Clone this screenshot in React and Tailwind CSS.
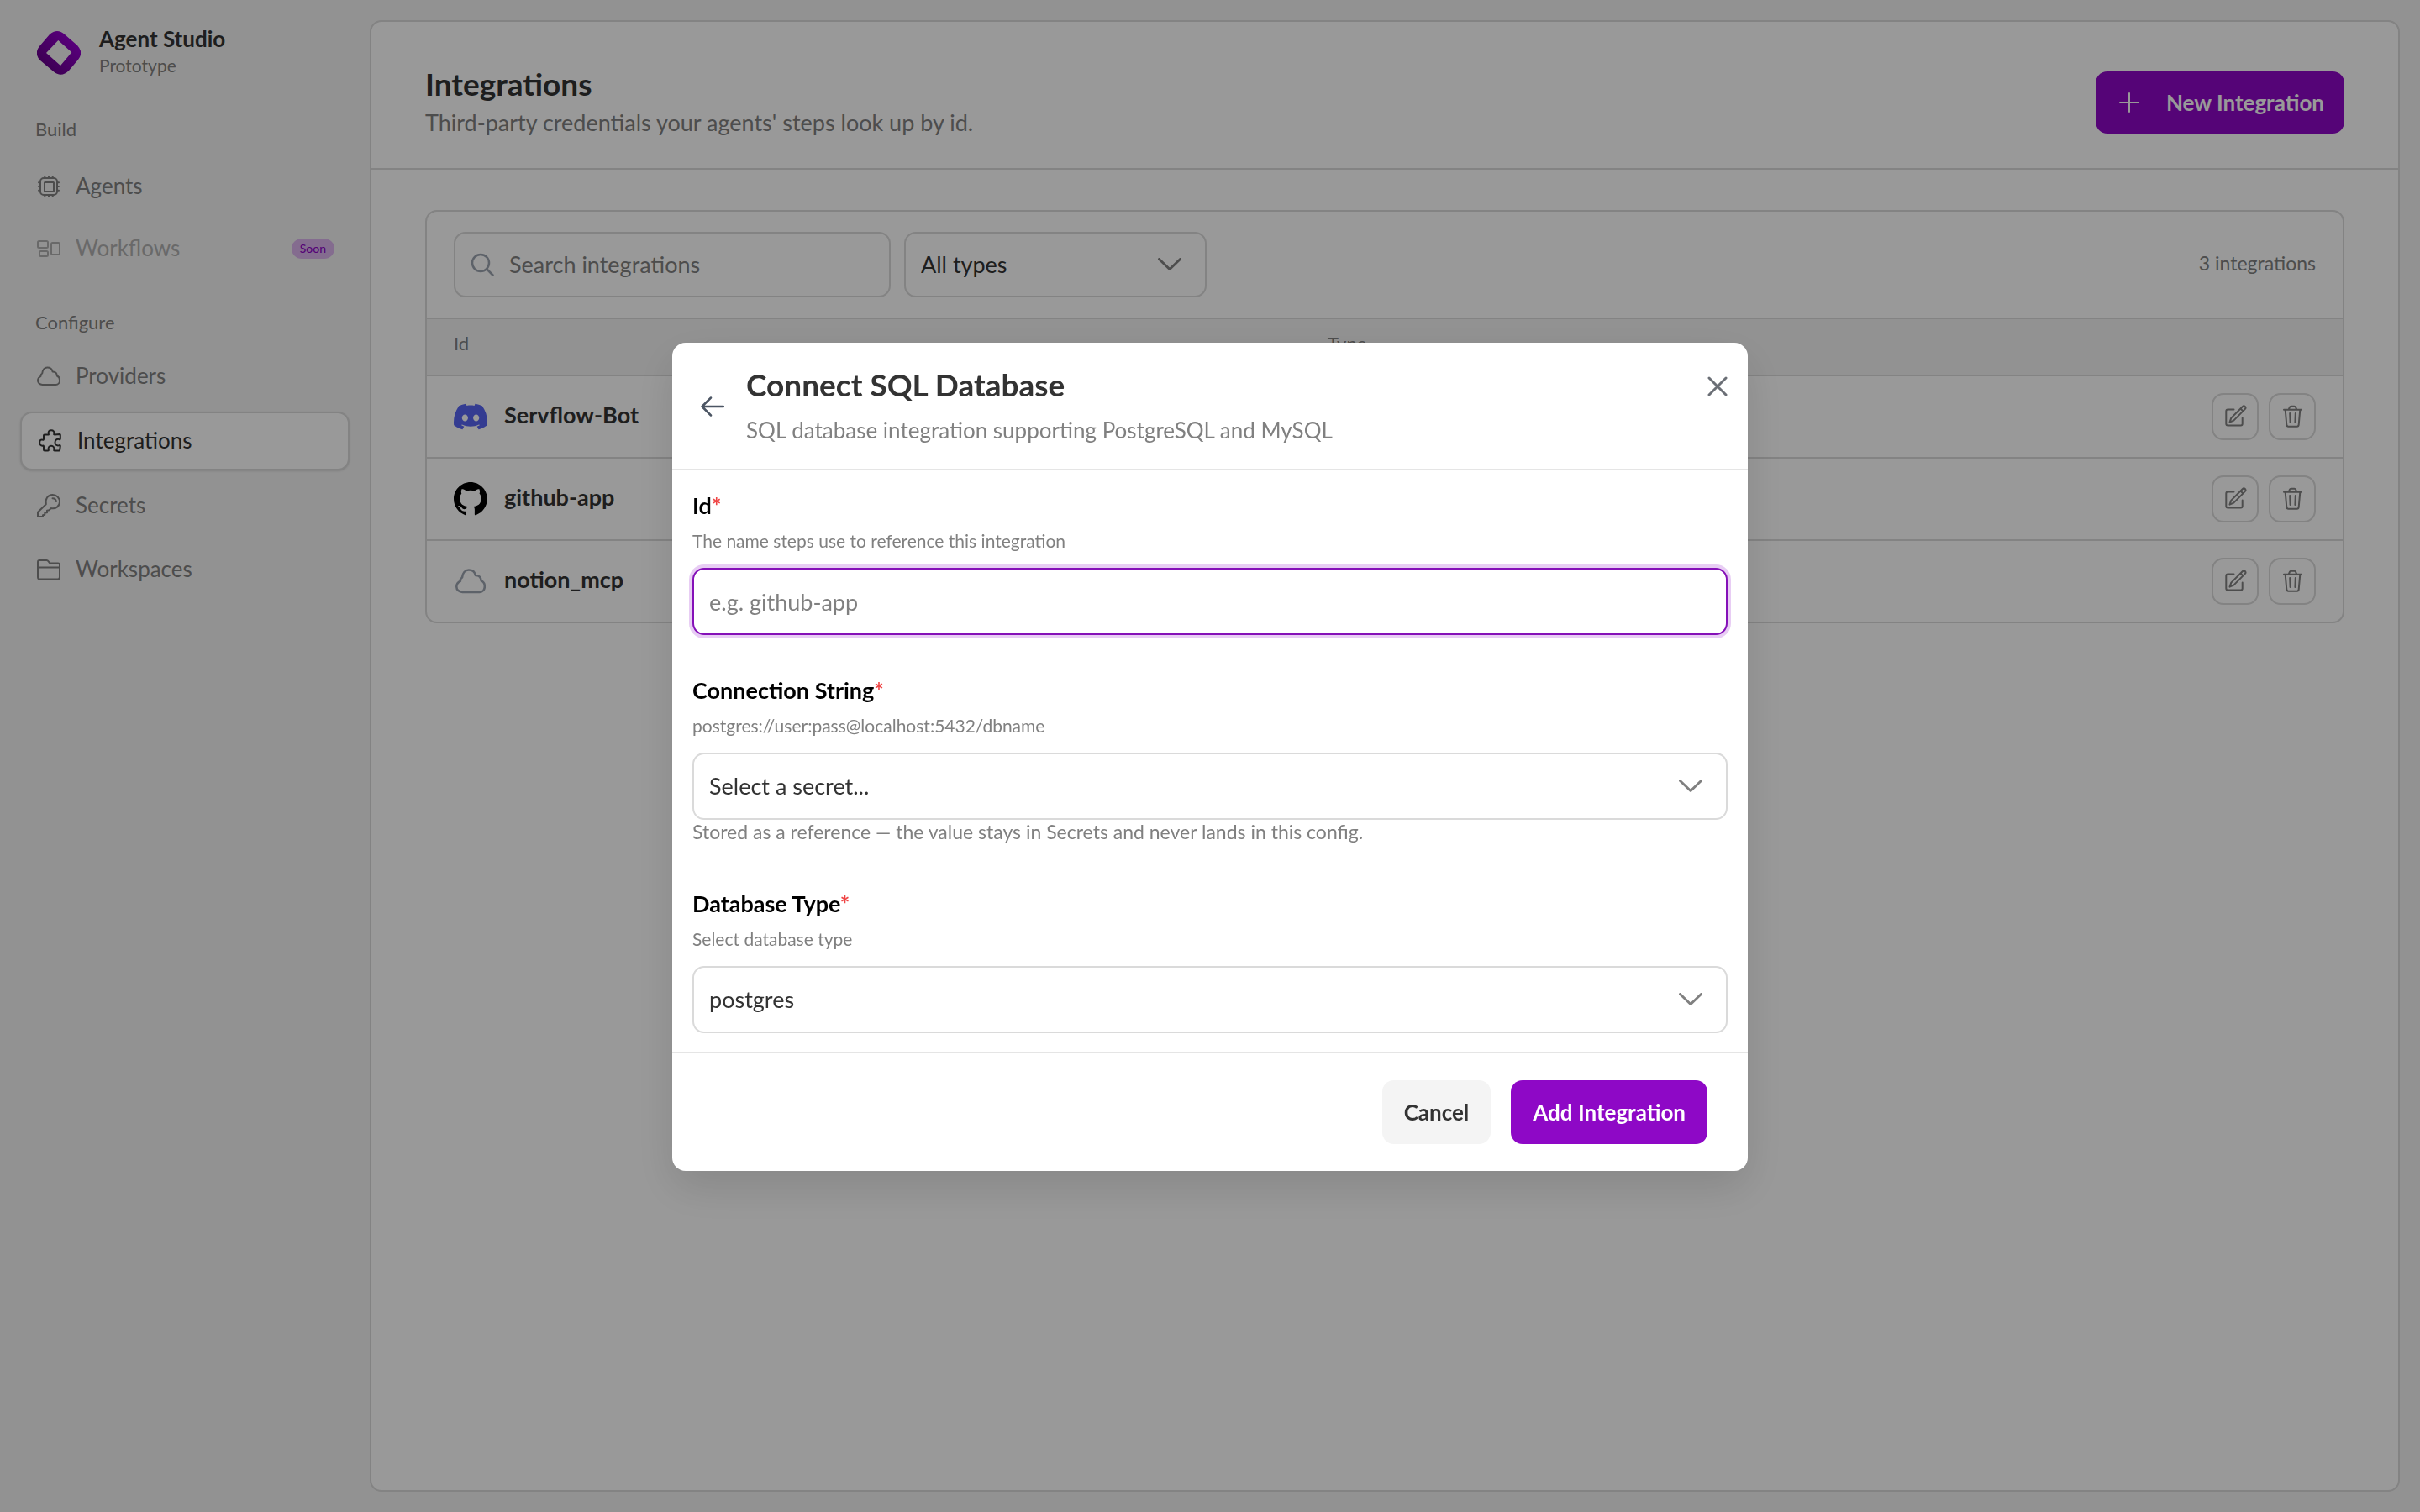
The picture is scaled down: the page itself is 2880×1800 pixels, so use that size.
import { useState } from 'react';
import { SiDiscord } from 'react-icons/si';

const stroke = {
  fill: 'none',
  stroke: 'currentColor',
  strokeWidth: 2,
  strokeLinecap: 'round',
  strokeLinejoin: 'round',
};

const ChipIcon = () => (
  <svg viewBox="0 0 28 28" className="size-7 shrink-0" {...stroke}>
    <rect x="4" y="4" width="20" height="20" rx="4" />
    <rect x="9" y="9" width="11" height="11" rx="0.5" />
    <path d="M9.3 4V2M14 4V2M18.7 4V2M9.3 26v-2M14 26v-2M18.7 26v-2M4 9.3H2M4 14H2M4 18.7H2M26 9.3h-2M26 14h-2M26 18.7h-2" />
  </svg>
);

const FlowIcon = () => (
  <svg viewBox="0 0 28 28" className="size-7 shrink-0" {...stroke}>
    <rect x="1" y="5" width="12" height="8" rx="1.5" />
    <rect x="3" y="17" width="10" height="6" rx="1.5" />
    <rect x="17" y="7" width="10" height="14" rx="1.5" />
  </svg>
);

const CloudIcon = ({ className = 'size-7 shrink-0' }) => (
  <svg viewBox="0 0 28 28" className={className} {...stroke}>
    <path d="M6.5 24C3.4 24 1 21.9 1 19c0-2.6 1.5-4.2 3.600-5.200-.2-1.500.5-2.600 1.600-3.300C6.600 6.500 9 3.500 12.300 3.500c3.300 0 5.700 2 6.300 5 3.200 0 5.200 2.100 5.200 5 2.200.9 3.300 2.900 3.300 5.200 0 2.900-1.900 5.300-4.700 5.300z" />
  </svg>
);

const PuzzleIcon = () => (
  <svg viewBox="0 0 28 28" className="size-7 shrink-0" {...stroke}>
    <path d="M6 7.500q0-1 1-1h4.200c.8 0 1-.5.7-1.200C11 2.800 12.500 1.200 15 1.200s4 1.600 3.200 4.100c-.3.7 0 1.200.8 1.200l6-.6c.5 0 .8.3.8.8v4.500c0 .9-.6 1.200-1.300.9-2.800-1-5 .9-5 3.600s2.200 4.400 5 3.400c.7-.3 1.300.1 1.300.8l-.6 4.600c-.1.7-.4 1-1 1H19c-.8 0-1-.5-.8-1.200.7-2.700-.8-4.600-3.200-4.600s-4 1.900-3.200 4.600c.2.7 0 1.200-.8 1.200H7q-1 0-1-1v-4c0-.8-.5-1.100-1.200-.8C2.500 20 1.200 18 1.200 15.800s1.400-4 3.600-3.200c.7.3 1.200 0 1.200-.8z" />
  </svg>
);

const KeyIcon = () => (
  <svg viewBox="0 0 28 28" className="size-7 shrink-0" {...stroke}>
    <path d="M10.800 12.200C9.500 6 13 1 18.600 1 23.500 1 27 4.800 27 9.300c0 5.200-4.600 9-10.300 7.800L14.500 19.300l-2.500.4v2.500l-2.700.3v2.300l-2.300.4V27H1v-5.200z" />
    <path d="M18.500 5.200c2.300 0 4.200 1.600 4.400 3.800" />
  </svg>
);

const FolderIcon = () => (
  <svg viewBox="0 0 28 28" className="size-7 shrink-0" {...stroke}>
    <path d="M1 23V5a2 2 0 0 1 2-2h8.500c1 0 1.500.4 2 1.100l1.300 1.700c.4.5.9.800 1.700.8H25a2 2 0 0 1 2 2V23a2.500 2.500 0 0 1-2.500 2.500h-21A2.500 2.500 0 0 1 1 23zM1 11.500h26" />
  </svg>
);

const EditIcon = () => (
  <svg viewBox="0 0 28 28" className="size-7" {...stroke}>
    <path d="M12.500 5.500H5.300a2 2 0 0 0-2 2v15a2 2 0 0 0 2 2h15.400a2 2 0 0 0 2-2v-7" />
    <path d="M7.500 20.600l1.800-5L22.700 2.200c1-1 2.200-1 3.100-.2.9 1 .9 2.200-.1 3.100L12.300 18.600zM20.500 4.500l2.800 2.900" />
  </svg>
);

const TrashIcon = () => (
  <svg viewBox="0 0 28 28" className="size-7" {...stroke}>
    <path d="M4 5.700h21M5.700 5.900l1.600 17.800c.1 1.300.8 2 2 2h10.400c1.200 0 1.900-.7 2-2l1.600-17.800M9.800 5.500l1.200-2.800c.3-.7.8-1 1.500-1h4c.7 0 1.200.3 1.500 1l1.200 2.800M11.200 10l.4 11M17.800 10l-.4 11" />
  </svg>
);

const GithubIcon = () => (
  <svg viewBox="0 0 98 96" className="w-10 shrink-0 fill-black">
    <path
      fillRule="evenodd"
      clipRule="evenodd"
      d="M48.854 0C21.839 0 0 22 0 49.217c0 21.756 13.993 40.172 33.405 46.690 2.427.49 3.316-1.059 3.316-2.362 0-1.141-.08-5.052-.08-9.127-13.590 2.934-16.420-5.867-16.420-5.867-2.184-5.704-5.420-7.170-5.420-7.170-4.448-3.015.324-3.015.324-3.015 4.934.326 7.523 5.052 7.523 5.052 4.367 7.496 11.404 5.378 14.235 4.074.404-3.178 1.699-5.378 3.074-6.600-10.839-1.141-22.243-5.378-22.243-24.283 0-5.378 1.940-9.778 5.014-13.200-.485-1.222-2.184-6.275.486-13.038 0 0 4.125-1.304 13.426 5.052a46.970 46.970 0 0 1 12.214-1.630c4.125 0 8.330.571 12.213 1.630 9.302-6.356 13.427-5.052 13.427-5.052 2.670 6.763.970 11.816.485 13.038 3.155 3.422 5.015 7.822 5.015 13.200 0 18.905-11.404 23.060-22.324 24.283 1.780 1.548 3.316 4.481 3.316 9.126 0 6.600-.08 11.897-.08 13.526 0 1.304.890 2.853 3.316 2.364 19.412-6.520 33.405-24.935 33.405-46.691C97.707 22 75.788 0 48.854 0z"
    />
  </svg>
);

const Chevron = () => (
  <svg viewBox="0 0 28 16" className="pointer-events-none absolute top-1/2 right-[30px] w-7 -translate-y-1/2 text-[#808080]" {...stroke} strokeWidth="3">
    <path d="M1.500 1.500L14 13.500l12.500-12" />
  </svg>
);

const Logo = () => (
  <svg viewBox="0 0 52 52" className="mt-1 size-[52px]">
    <defs>
      <linearGradient id="logo" x1="0" y1="1" x2="1" y2="0">
        <stop offset="0.200" stopColor="#67008c" />
        <stop offset="0.900" stopColor="#9a00d8" />
      </linearGradient>
    </defs>
    <path
      fill="url(#logo)"
      fillRule="evenodd"
      d="M15 4Q24-4 33 4L48 17Q56 25.500 49 34L38 47Q29 56 19.500 48L4 35Q-4 27 3 18ZM25.300 11L11 26L28 41L41.300 25.300Z"
    />
  </svg>
);

const buildItems = [
  { label: 'Agents', icon: ChipIcon },
  { label: 'Workflows', icon: FlowIcon, soon: true },
];

const configureItems = [
  { label: 'Providers', icon: CloudIcon },
  { label: 'Integrations', icon: PuzzleIcon, active: true },
  { label: 'Secrets', icon: KeyIcon },
  { label: 'Workspaces', icon: FolderIcon },
];

const integrations = [
  { id: 'Servflow-Bot', type: 'Discord', icon: <SiDiscord className="size-10 text-[#5865f2]" /> },
  { id: 'github-app', type: 'GitHub', icon: <GithubIcon /> },
  {
    id: 'notion_mcp',
    type: 'MCP',
    icon: (
      <span className="flex w-10 justify-center text-[#9ca3af]">
        <CloudIcon className="size-9" />
      </span>
    ),
  },
];

function NavItem({ label, icon: Icon, active, soon }) {
  let style = 'h-[68px] text-[#808080]';
  if (active) style = 'h-[70px] border-2 border-[#dadada] bg-white text-[#333333] shadow-sm';
  if (soon) style = 'h-[68px] text-[#b0b0b0]';

  return (
    <li>
      <a href="#" className={`flex items-center gap-[18px] rounded-[14px] pr-[18px] pl-5 text-[26px] leading-8 ${style}`}>
        <Icon />
        <span className="pb-0.5">{label}</span>
        {soon && (
          <span className="ml-auto rounded-full bg-[#dcb5ee] px-2.5 text-[14px] leading-6 font-medium text-[#8e08c6]">
            Soon
          </span>
        )}
      </a>
    </li>
  );
}

function Field({ id, label, description, hint, children }) {
  return (
    <div className="flex flex-col">
      <label htmlFor={id} className="text-[27px] leading-8 font-bold text-black">
        {label}
        <span className="text-[#ef4444]">*</span>
      </label>
      <p className="mt-3.5 text-[21px] leading-6 text-[#808080]">{description}</p>
      <div className="relative mt-5">{children}</div>
      {hint && <p className="mt-0.5 pb-2 text-[23px] leading-6 text-[#808080]">{hint}</p>}
    </div>
  );
}

const selectClass =
  'h-20 w-full appearance-none rounded-[14px] border-2 border-[#dadada] bg-white px-[18px] text-[27px] text-[#333333] outline-none';

function ConnectModal() {
  const [name, setName] = useState('');

  return (
    <div className="fixed inset-0 flex items-center justify-center bg-black/40 pt-0.5">
      <div
        role="dialog"
        aria-labelledby="modal-title"
        className="w-full max-w-[1280px] rounded-2xl bg-white shadow-[0_20px_50px_rgba(0,0,0,0.12)]"
      >
        <div className="flex items-center border-b-2 border-[#e5e5e5] pt-[30px] pr-6 pb-7 pl-[34px]">
          <button type="button" aria-label="Back" className="mr-[26px] text-[#4b5563]">
            <svg viewBox="0 0 28 28" className="size-7" {...stroke} strokeWidth="2.5">
              <path d="M12 3.500L1.500 14 12 24.500M1.500 14H27" />
            </svg>
          </button>
          <div>
            <h2 id="modal-title" className="text-[37px] leading-10 font-bold text-[#333333]">
              Connect SQL Database
            </h2>
            <p className="mt-4 text-[26px] leading-9 text-[#808080]">
              SQL database integration supporting PostgreSQL and MySQL
            </p>
          </div>
          <button type="button" aria-label="Close" className="mt-2.5 ml-auto self-start text-[#6b6f76]">
            <svg viewBox="0 0 24 24" className="size-6" {...stroke} strokeWidth="3">
              <path d="M2 2l20 20M22 2L2 22" />
            </svg>
          </button>
        </div>

        <form>
          <div className="flex flex-col gap-[50px] px-6 pt-[26px] pb-[22px]">
            <Field id="id" label="Id" description="The name steps use to reference this integration">
              <input
                id="id"
                type="text"
                value={name}
                onChange={(e) => setName(e.target.value)}
                placeholder="e.g. github-app"
                className="block h-20 w-full rounded-[14px] border-2 border-[#8510b8] bg-white px-[18px] text-[27px] text-[#333333] ring-4 ring-[#e8cdf4] outline-none placeholder:text-[#808080]"
              />
            </Field>
            <Field
              id="connection"
              label="Connection String"
              description="postgres://user:pass@localhost:5432/dbname"
              hint="Stored as a reference — the value stays in Secrets and never lands in this config."
            >
              <select id="connection" className={`block ${selectClass}`}>
                <option>Select a secret...</option>
              </select>
              <Chevron />
            </Field>
            <Field id="dbtype" label="Database Type" description="Select database type">
              <select id="dbtype" className={`block ${selectClass}`}>
                <option>postgres</option>
                <option>mysql</option>
              </select>
              <Chevron />
            </Field>
          </div>

          <div className="flex justify-end gap-6 border-t-2 border-[#e5e5e5] px-12 py-8">
            <button type="button" className="h-[76px] rounded-[14px] bg-[#f4f4f4] px-[26px] text-[26px] font-bold text-[#333333]">
              Cancel
            </button>
            <button type="button" className="h-[76px] rounded-[14px] bg-[#8e08c6] px-[26px] text-[26px] font-bold text-white">
              Add Integration
            </button>
          </div>
        </form>
      </div>
    </div>
  );
}

export default function App() {
  return (
    <div className="flex min-h-screen bg-[#f4f4f4] font-[Lato,sans-serif] text-[#333333]">
      {/* Sidebar */}
      <aside className="w-[440px] shrink-0 px-6 pt-[30px]">
        <div className="flex items-center gap-[22px] px-5">
          <Logo />
          <div className="flex flex-col gap-0.5">
            <span className="text-[26px] leading-8 font-bold">Agent Studio</span>
            <span className="text-[21px] leading-7 text-[#808080]">Prototype</span>
          </div>
        </div>
        <nav>
          <h2 className="mt-12 px-[18px] text-[22px] leading-7 text-[#808080]">Build</h2>
          <ul className="mt-5 flex flex-col gap-1.5">
            {buildItems.map((item) => (
              <NavItem key={item.label} {...item} />
            ))}
          </ul>
          <h2 className="mt-10 px-[18px] text-[22px] leading-7 text-[#808080]">Configure</h2>
          <ul className="mt-4 flex flex-col gap-2">
            {configureItems.map((item) => (
              <NavItem key={item.label} {...item} />
            ))}
          </ul>
        </nav>
      </aside>

      {/* Main panel */}
      <main className="my-6 mr-6 min-w-0 flex-1 rounded-[14px] border-2 border-[#dadada] bg-white">
        <header className="flex items-center justify-between border-b-2 border-[#dadada] px-16 pt-[54px] pb-9">
          <div>
            <h1 className="text-[37px] leading-10 font-bold">Integrations</h1>
            <p className="mt-2 text-[27px] leading-9 text-[#808080]">
              Third-party credentials your agents' steps look up by id.
            </p>
          </div>
          <button
            type="button"
            className="flex h-[74px] items-center gap-8 rounded-[14px] bg-[#8e08c6] pr-6 pl-7 text-[26px] font-bold text-white"
          >
            <svg viewBox="0 0 24 24" className="size-6" {...stroke}>
              <path d="M12 1v22M1 12h22" />
            </svg>
            New Integration
          </button>
        </header>

        <div className="px-16 pt-12">
          <div className="overflow-hidden rounded-[14px] border-2 border-[#dadada]">
            <div className="flex items-center gap-4 border-b-2 border-[#dadada] px-8 py-6">
              <label className="flex h-[78px] w-[520px] items-center gap-[18px] rounded-[14px] border-2 border-[#dadada] px-[18px]">
                <svg viewBox="0 0 28 28" className="size-7 shrink-0 text-[#9ca3af]" {...stroke} strokeWidth="2.5">
                  <circle cx="12" cy="12" r="10" />
                  <path d="M19.500 19.500l7 7" />
                </svg>
                <input
                  type="search"
                  aria-label="Search integrations"
                  placeholder="Search integrations"
                  className="w-full text-[27px] outline-none placeholder:text-[#808080]"
                />
              </label>
              <div className="relative h-[78px] w-[360px]">
                <select
                  aria-label="Type"
                  className="size-full appearance-none rounded-[14px] border-2 border-[#dadada] bg-white px-[18px] text-[27px] outline-none"
                >
                  <option>All types</option>
                </select>
                <Chevron />
              </div>
              <span className="ml-auto pb-1 text-[23px] leading-7 text-[#808080]">3 integrations</span>
            </div>

            <table className="w-full table-fixed border-separate border-spacing-0">
              <thead>
                <tr className="bg-[#f4f4f4] text-left text-[22px] leading-7 text-[#808080]">
                  <th className="h-[68px] w-[1040px] border-b-2 border-[#dadada] px-8 pb-2 font-normal">Id</th>
                  <th className="border-b-2 border-[#dadada] px-8 pb-2 font-normal">Type</th>
                  <th className="border-b-2 border-[#dadada]" aria-label="Actions"></th>
                </tr>
              </thead>
              <tbody className="[&>tr:last-child>td]:h-24 [&>tr:last-child>td]:border-b-0">
                {integrations.map((row) => (
                  <tr key={row.id}>
                    <td className="h-[98px] border-b-2 border-[#dadada] px-8">
                      <div className="flex items-center gap-5">
                        {row.icon}
                        <span className="pb-1 text-[27px] leading-8 font-bold">{row.id}</span>
                      </div>
                    </td>
                    <td className="border-b-2 border-[#dadada] px-8 text-[26px] text-[#808080]">{row.type}</td>
                    <td className="border-b-2 border-[#dadada] px-8">
                      <div className="flex justify-end gap-3 text-[#808080]">
                        <button
                          type="button"
                          aria-label={`Edit ${row.id}`}
                          className="flex size-14 items-center justify-center rounded-[14px] border-2 border-[#dadada]"
                        >
                          <EditIcon />
                        </button>
                        <button
                          type="button"
                          aria-label={`Delete ${row.id}`}
                          className="flex size-14 items-center justify-center rounded-[14px] border-2 border-[#dadada]"
                        >
                          <TrashIcon />
                        </button>
                      </div>
                    </td>
                  </tr>
                ))}
              </tbody>
            </table>
          </div>
        </div>
      </main>

      <ConnectModal />
    </div>
  );
}
